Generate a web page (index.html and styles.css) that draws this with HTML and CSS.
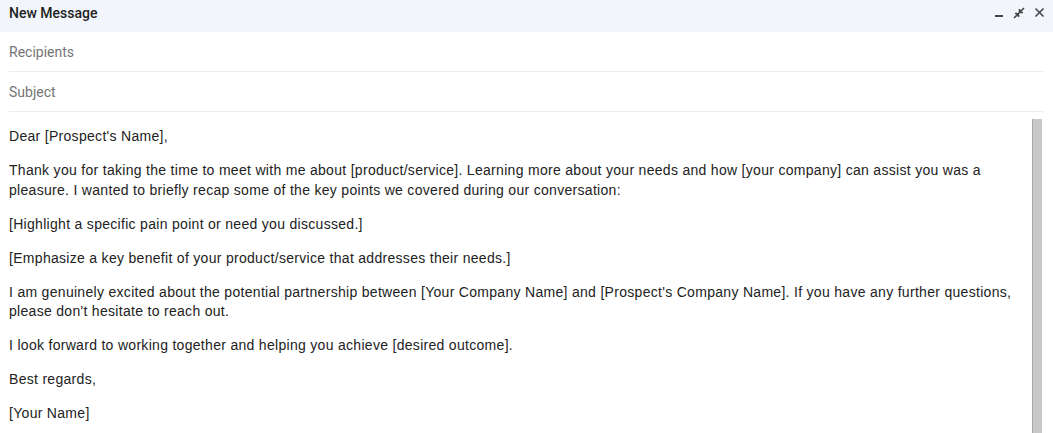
FILE: index.html
```html
<!DOCTYPE html>
<html>
<head>
<meta charset="utf-8">
<link rel="stylesheet" href="styles.css">
</head>
<body>
<div class="compose">
  <div class="header">
    <span class="title">New Message</span>
    <div class="actions">
      <svg class="icon" width="10" height="10" viewBox="0 0 10 10"><rect x="1" y="7" width="8" height="2" fill="#444746"/></svg>
      <svg class="icon" width="12" height="12" viewBox="0 0 12 12"><path d="M1 11 L5 7 M2 6.5 H5.5 V10 M11 1 L7 5 M6.5 2 V5.5 H10" stroke="#444746" stroke-width="1.6" fill="none"/></svg>
      <svg class="icon" width="11" height="11" viewBox="0 0 11 11"><path d="M1.5 1.5 L9.5 9.5 M9.5 1.5 L1.5 9.5" stroke="#444746" stroke-width="1.6" fill="none"/></svg>
    </div>
  </div>
  <div class="field">Recipients</div>
  <div class="field">Subject</div>
  <div class="body">
    <div class="text">
      <p>Dear [Prospect's Name],</p>
      <p>Thank you for taking the time to meet with me about [product/service]. Learning more about your needs and how [your company] can assist you was a pleasure. I wanted to briefly recap some of the key points we covered during our conversation:</p>
      <p>[Highlight a specific pain point or need you discussed.]</p>
      <p>[Emphasize a key benefit of your product/service that addresses their needs.]</p>
      <p>I am genuinely excited about the potential partnership between [Your Company Name] and [Prospect's Company Name]. If you have any further questions, please don't hesitate to reach out.</p>
      <p>I look forward to working together and helping you achieve [desired outcome].</p>
      <p>Best regards,</p>
      <p>[Your Name]</p>
    </div>
    <div class="scrollbar"></div>
  </div>
</div>
</body>
</html>
```
FILE: styles.css
```css
html, body {
  margin: 0;
  padding: 0;
  background: #ffffff;
  overflow: hidden;
}
.compose {
  width: 1053px;
  height: 433px;
  display: flex;
  flex-direction: column;
  font-family: Roboto, "Liberation Sans", Arial, sans-serif;
}
.header {
  height: 32px;
  background: #f2f6fc;
  display: flex;
  align-items: center;
  justify-content: space-between;
  padding: 0 8px 0 9px;
  box-sizing: border-box;
}
.title {
  font-size: 14px;
  font-weight: 500;
  color: #1f1f1f;
  margin-top: -7px;
}
.actions {
  display: flex;
  align-items: center;
  gap: 9px;
  margin-top: -7px;
}
.icon { display: block; }
.field {
  margin: 0 10px 0 9px;
  height: 40px;
  box-sizing: border-box;
  border-bottom: 1px solid #ececec;
  display: flex;
  align-items: center;
  font-size: 14px;
  color: #757575;
  padding-top: 1px;
}
.body {
  flex: 1;
  position: relative;
  min-height: 0;
}
.text {
  height: 100%;
  box-sizing: border-box;
  padding: 15px 10px 0 9px;
  font-family: "Liberation Sans", Arial, sans-serif;
  font-size: 14px;
  letter-spacing: 0.3px;
  line-height: 19.5px;
  color: #222222;
  overflow: hidden;
}
.text p {
  margin: 0 0 14.5px 0;
}
.scrollbar {
  position: absolute;
  top: 7px;
  bottom: 0;
  right: 11px;
  width: 9px;
  background: #c8c8c8;
  border-left: 1px solid #a9a9a9;
}
```
